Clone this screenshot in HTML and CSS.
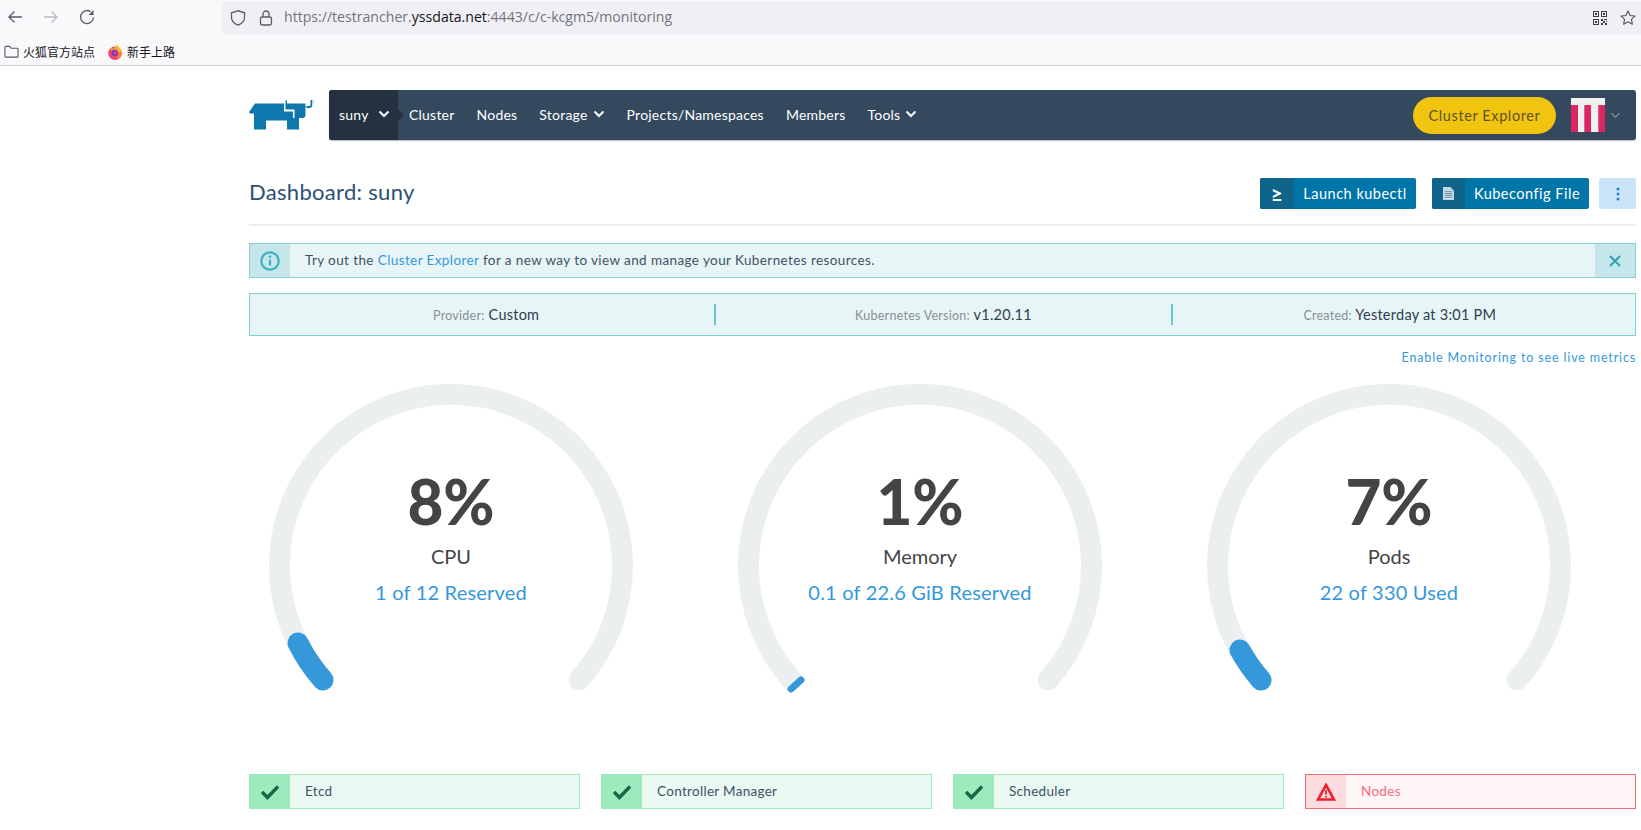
FILE: index.html
```html
<!DOCTYPE html>
<html lang="en">
<head>
<meta charset="utf-8">
<title>Dashboard: suny</title>
<link rel="stylesheet" href="styles.css">
</head>
<body>
<header class="chrome">
  <div class="toolbar">
    <div class="nav-btns">
      <svg class="tb-icon" viewBox="0 0 16 16"><path d="M15 8H1.800M7.500 2.500 2 8l5.500 5.500" fill="none" stroke="#5b5b66" stroke-width="1.300"/></svg>
      <svg class="tb-icon" viewBox="0 0 16 16"><path d="M1 8h13.200M8.500 2.500 14 8l-5.500 5.500" fill="none" stroke="#b9b9bf" stroke-width="1.300"/></svg>
      <svg class="tb-icon" viewBox="0 0 16 16"><path d="M14.500 8.500A6.500 6.500 0 1 1 11.500 2.600" fill="none" stroke="#5b5b66" stroke-width="1.400"/><path d="M14.500 1v5h-5z" fill="#5b5b66"/></svg>
    </div>
    <div class="urlbar">
      <svg class="url-icon" viewBox="0 0 16 16"><path d="M8 .8 1.500 2.800v4.700c0 3.500 2.700 6.200 6.500 7.700 3.800-1.500 6.500-4.200 6.500-7.700V2.800z" fill="none" stroke="#5b5b66" stroke-width="1.300"/></svg>
      <svg class="url-icon lock" viewBox="0 0 16 16"><rect x="2.500" y="7" width="11" height="8" rx="1.800" fill="none" stroke="#5b5b66" stroke-width="1.300"/><path d="M5 7V4a3 3 0 0 1 6 0v3" fill="none" stroke="#5b5b66" stroke-width="1.300"/></svg>
      <span class="url">https://testrancher.<b>yssdata.net</b>:4443/c/c-kcgm5/monitoring</span>
      <svg class="qr" viewBox="0 0 14 14"><path d="M0 0h6v6H0zM1 1v4h4V1zM2 2h2v2H2zM8 0h6v6H8zM9 1v4h4V1zM10 2h2v2h-2zM0 8h6v6H0zM1 9v4h4V9zM2 10h2v2H2zM8 8h2v2H8zM11 8h3v1h-3zM10 10h2v2h-2zM12 12h2v2h-2zM8 12h2v2H8zM13 10h1v1h-1z" fill="#3a3a40" fill-rule="evenodd"/></svg>
      <svg class="star" viewBox="0 0 16 16"><path d="m8 1 2.100 4.500 4.900.600-3.600 3.300 1 4.800L8 11.800l-4.400 2.400 1-4.800L1 6.100l4.900-.600z" fill="none" stroke="#5b5b66" stroke-width="1.200" stroke-linejoin="round"/></svg>
    </div>
  </div>
  <div class="bookmarks">
    <span class="bookmark"><svg class="bm-icon" viewBox="0 0 16 16"><path d="M1 13V3.500a1 1 0 0 1 1-1h3.800l1.700 2H14a1 1 0 0 1 1 1V13a1 1 0 0 1-1 1H2a1 1 0 0 1-1-1z" fill="none" stroke="#5b5b66" stroke-width="1.200"/></svg>火狐官方站点</span>
    <span class="bookmark"><svg class="bm-icon fox" viewBox="0 0 16 16"><circle cx="8" cy="9.200" r="6.800" fill="#f5456c"/><path d="M9 0c1 2 4.500 3 5.800 8L8 11 3 4c2 .500 3.500 1 4 .500C8 3.500 9.500 2 9 0z" fill="#ffb52e"/><path d="M14.800 8c.3 3.500-1.500 6-4 7L8 9z" fill="#ff7a2e"/><circle cx="7.800" cy="9" r="3.400" fill="#7b3fb5"/><circle cx="8.300" cy="8.700" r="1.700" fill="#e8417f"/></svg>新手上路</span>
  </div>
</header>

<main class="page">
  <nav class="topbar">
    <svg class="logo" viewBox="0 0 66 30"><path d="M0 12 6 3.500H35V11.500H44V18H50V29.500H38V20.500H17V29.500H5V13.500L1 13.500z" fill="#0e77ab"/><path d="M36.500 .5H38V3.500H56.500V15q0 3-3 3H45.500V9.500H36.500z" fill="#0e77ab"/><path d="M57.500 6H60q1.500 0 1.500-1.500V0h1.800V5q0 3-3 3H57.500z" fill="#0e77ab"/><circle cx="65" cy="1.500" r=".8" fill="none" stroke="#9cc4d8" stroke-width=".5"/></svg>
    <div class="bar">
      <div class="cluster-cell">suny <svg class="chev" viewBox="0 0 12 8"><path d="M1.500 1.500 6 6l4.500-4.500" fill="none" stroke="#fff" stroke-width="2"/></svg></div>
      <div class="links">
        <a>Cluster</a>
        <a>Nodes</a>
        <a>Storage <svg class="chev" viewBox="0 0 12 8"><path d="M1.500 1.500 6 6l4.500-4.500" fill="none" stroke="#fff" stroke-width="2"/></svg></a>
        <a>Projects/Namespaces</a>
        <a>Members</a>
        <a>Tools <svg class="chev" viewBox="0 0 12 8"><path d="M1.500 1.500 6 6l4.500-4.500" fill="none" stroke="#fff" stroke-width="2"/></svg></a>
      </div>
      <button class="explorer">Cluster Explorer</button>
      <svg class="avatar" viewBox="0 0 34 34"><rect width="34" height="34" fill="#f0f0f0"/><path d="M0 7h7v27H0zM13.300 7H20v27h-6.700zM27.300 7H34v27h-6.700z" fill="#db2660"/></svg>
      <svg class="user-chev" viewBox="0 0 12 8"><path d="M1.500 1.500 6 6l4.500-4.500" fill="none" stroke="#7c8a98" stroke-width="1.600"/></svg>
    </div>
  </nav>

  <section class="heading">
    <h1>Dashboard: suny</h1>
    <div class="actions">
      <button class="action"><span class="action-icon ge">≥</span><span class="action-label">Launch kubectl</span></button>
      <button class="action"><span class="action-icon"><svg class="file" viewBox="0 0 12 14"><path d="M0 0h8l4 4v10H0z" fill="#c5d8e2"/><path d="M2 5h8M2 7h8M2 9h8M2 11h8" stroke="#4f7f9b" stroke-width=".8"/></svg></span><span class="action-label">Kubeconfig File</span></button>
      <button class="more"><svg class="dots" viewBox="0 0 4 14"><circle cx="2" cy="2" r="1.500"/><circle cx="2" cy="7" r="1.500"/><circle cx="2" cy="12" r="1.500"/></svg></button>
    </div>
  </section>

  <section class="banner">
    <div class="banner-icon"><svg class="info" viewBox="0 0 20 20"><circle cx="10" cy="10" r="8.700" fill="none" stroke="#3cb3c1" stroke-width="2.200"/><path d="M10 8.500v6" stroke="#3cb3c1" stroke-width="2.200"/><circle cx="10" cy="5.800" r="1.300" fill="#3cb3c1"/></svg></div>
    <p class="banner-text">Try out the <a>Cluster Explorer</a> for a new way to view and manage your Kubernetes resources.</p>
    <div class="banner-close"><svg class="close" viewBox="0 0 12 12"><path d="M1 1l10 10M11 1 1 11" stroke="#2a9fad" stroke-width="1.800"/></svg></div>
  </section>

  <section class="facts">
    <div class="fact"><span class="fact-key">Provider:</span> Custom</div>
    <div class="fact"><span class="fact-key">Kubernetes Version:</span> v1.20.11</div>
    <div class="fact"><span class="fact-key">Created:</span> Yesterday at 3:01 PM</div>
  </section>

  <div class="monitor-link"><a>Enable Monitoring to see live metrics</a></div>

  <section class="gauges">
    <div class="gauge">
      <svg class="dial" viewBox="0 0 364 320"><path class="track" d="M54 296A171.500 171.500 0 1 1 310 296"/><path class="fill" d="M54 296A171.500 171.500 0 0 1 29 259"/></svg>
      <div class="readout"><div class="pct">8%</div><div class="name">CPU</div><div class="sub">1 of 12 Reserved</div></div>
    </div>
    <div class="gauge">
      <svg class="dial" viewBox="0 0 364 320"><path class="track" d="M54 296A171.500 171.500 0 1 1 310 296"/><path class="fill thin" d="M53 305 63 296"/></svg>
      <div class="readout"><div class="pct">1%</div><div class="name">Memory</div><div class="sub">0.1 of 22.6 GiB Reserved</div></div>
    </div>
    <div class="gauge">
      <svg class="dial" viewBox="0 0 364 320"><path class="track" d="M54 296A171.500 171.500 0 1 1 310 296"/><path class="fill" d="M54 296A171.500 171.500 0 0 1 33 266"/></svg>
      <div class="readout"><div class="pct">7%</div><div class="name">Pods</div><div class="sub">22 of 330 Used</div></div>
    </div>
  </section>

  <section class="statuses">
    <div class="status ok"><span class="status-icon"><svg class="check" viewBox="0 0 20 16"><path d="M2 8l5.500 5.500L18 2.500" fill="none" stroke="#146a46" stroke-width="3.400"/></svg></span><span class="status-label">Etcd</span></div>
    <div class="status ok"><span class="status-icon"><svg class="check" viewBox="0 0 20 16"><path d="M2 8l5.500 5.500L18 2.500" fill="none" stroke="#146a46" stroke-width="3.400"/></svg></span><span class="status-label">Controller Manager</span></div>
    <div class="status ok"><span class="status-icon"><svg class="check" viewBox="0 0 20 16"><path d="M2 8l5.500 5.500L18 2.500" fill="none" stroke="#146a46" stroke-width="3.400"/></svg></span><span class="status-label">Scheduler</span></div>
    <div class="status bad"><span class="status-icon"><svg class="warn" viewBox="0 0 20 18"><path d="M10 2 18 16.500H2z" fill="none" stroke="#f01f2d" stroke-width="2.600"/><path d="M10 7v4.500M10 12.800v1.800" stroke="#f01f2d" stroke-width="1.800"/></svg></span><span class="status-label">Nodes</span></div>
  </section>
</main>
</body>
</html>
```
FILE: styles.css
```css
* { box-sizing: border-box; }
html, body { margin: 0; padding: 0; background: #fff; }
body { font-family: Lato, "Open Sans", sans-serif; color: #3d3d3d; height: 830px; overflow: hidden; }
svg { display: block; }
button { font: inherit; border: 0; padding: 0; }

.chrome { height: 66px; background: #f9f9fb; border-bottom: 1px solid #ccc; }
.toolbar { height: 34px; display: flex; align-items: center; }
.nav-btns { width: 222px; display: flex; gap: 20px; padding-left: 7px; }
.tb-icon { width: 16px; height: 16px; }
.urlbar { flex: 1; height: 33px; margin-top: 1px; background: #f0f0f4; border-radius: 4px 0 0 4px; display: flex; align-items: center; padding-left: 8px; }
.url-icon { width: 16px; height: 16px; margin-right: 12px; }
.url-icon.lock { margin-right: 10px; }
.url { font: 14.100px "Open Sans", sans-serif; color: #73737b; flex: 1; padding-bottom: 2px; }
.url b { font-weight: 400; color: #15141a; }
.qr { width: 14px; height: 14px; margin-right: 13px; }
.star { width: 16px; height: 16px; margin-right: 5px; }
.bookmarks { height: 31px; padding: 4px 0 0 4px; display: flex; align-items: center; gap: 12px; font: 12px "Noto Sans CJK SC", sans-serif; color: #15141a; }
.bookmark { display: flex; align-items: center; gap: 4px; }
.bm-icon { width: 15px; height: 15px; }
.bm-icon.fox { width: 16px; height: 16px; }

.page { padding: 24px 5px 0 249px; }
.topbar { display: flex; height: 50px; align-items: center; }
.logo { width: 66px; height: 30px; margin-right: 14px; flex: none; }
.bar { flex: 1; height: 50px; background: #34495e; border-radius: 3px; display: flex; align-items: center; color: #fff; font-size: 14px; letter-spacing: .22px; box-shadow: 0 1px 1px #bbb; }
.cluster-cell { width: 69px; height: 100%; padding: 0 0 2px 10px; background: #233140; border-radius: 3px 0 0 3px; display: flex; align-items: center; gap: 9px; position: relative; }
.cluster-cell::after { content: ""; position: absolute; right: -6px; top: 19px; border-left: 6px solid #233140; border-top: 6px solid transparent; border-bottom: 6px solid transparent; }
.chev { width: 12px; height: 8px; display: inline-block; }
.links { flex: 1; display: flex; gap: 22px; padding: 0 0 2px 11px; }
.links a { display: flex; align-items: center; gap: 5px; }
.explorer { width: 143px; height: 37px; border-radius: 19px; background: #f1c40f; color: #5a5526; font-size: 14.500px; letter-spacing: .6px; margin-right: 15px; }
.avatar { width: 34px; height: 34px; }
.user-chev { width: 11px; height: 7px; margin: 0 15px 0 5px; }

.heading { display: flex; justify-content: space-between; align-items: flex-start; height: 73px; margin-top: 13px; padding-top: 25px; border-bottom: 2px solid #ebeff0; }
h1 { margin: 0; font-size: 22px; font-weight: 400; color: #2c5075; letter-spacing: .3px; }
.actions { display: flex; }
.action { height: 31px; background: #0075a8; color: #fff; display: flex; align-items: center; border-radius: 2px; margin-right: 16px; overflow: hidden; font-size: 14.500px; letter-spacing: .5px; }
.action + .action { margin-right: 10px; }
.action-icon { width: 34px; height: 31px; background: #0f6489; display: flex; align-items: center; justify-content: center; }
.action + .action .action-icon { width: 33px; }
.ge { font-size: 21px; font-weight: 700; }
.file { width: 11px; height: 13px; }
.action-label { width: 122px; text-align: center; }
.action + .action .action-label { width: 124px; }
.more { width: 37px; height: 31px; background: #cce4f7; border-radius: 2px; display: flex; align-items: center; justify-content: center; }
.dots { width: 4px; height: 14px; fill: #1c84d4; }

.banner { display: flex; height: 35px; margin-top: 17px; background: #e7f5f7; border: 1px solid #8ad0d6; align-items: stretch; }
.banner-icon { width: 40px; background: #c5e7ec; display: flex; align-items: center; justify-content: center; }
.info { width: 20px; height: 20px; }
.banner-text { flex: 1; margin: 0; padding-left: 15px; font-size: 13.500px; letter-spacing: .4px; line-height: 33px; color: #3e5266; }
.banner-text a { color: #3498db; }
.banner-close { width: 40px; background: #c5e7ec; display: flex; align-items: center; justify-content: center; }
.close { width: 12px; height: 12px; }

.facts { display: grid; grid-template-columns: repeat(3, 1fr); height: 43px; margin-top: 15px; padding: 0 8px; background: #e7f5f7; border: 1px solid #7fd0d3; align-items: center; }
.fact { text-align: center; font-size: 14.500px; letter-spacing: .25px; height: 21px; line-height: 21px; color: #2d3e50; }
.fact + .fact { border-left: 2px solid #6fc5cb; }
.fact-key { font-size: 12.500px; color: #888f95; }

.monitor-link { text-align: right; height: 48px; padding-top: 14px; font-size: 12.500px; letter-spacing: .85px; color: #3498db; line-height: 16px; }

.gauges { display: flex; padding-left: 20px; gap: 105px; height: 390px; }
.gauge { position: relative; width: 364px; height: 320px; }
.dial { width: 364px; height: 320px; }
.track { fill: none; stroke: #ebeff0; stroke-width: 21; stroke-linecap: round; }
.fill { fill: none; stroke: #3498db; stroke-width: 21; stroke-linecap: round; }
.fill.thin { stroke-width: 7; }
.readout { position: absolute; left: 0; right: 0; top: 85px; text-align: center; }
.pct { font-size: 62px; font-weight: 900; line-height: 64px; color: #444; }
.name { font-size: 20px; line-height: 26px; margin-top: 10px; color: #444; font-weight: 400; }
.sub { font-size: 20px; line-height: 26px; margin-top: 10px; color: #3498db; letter-spacing: .2px; }

.statuses { display: grid; grid-template-columns: repeat(4, 331px); justify-content: space-between; }
.status { height: 35px; display: flex; align-items: stretch; border: 1px solid #9ceabd; background: #ebf9f3; font-size: 13.500px; letter-spacing: .3px; }
.status-icon { width: 40px; display: flex; align-items: center; justify-content: center; background: #9ceabd; }
.status-label { padding-left: 15px; line-height: 33px; color: #3e5266; }
.check { width: 20px; height: 16px; }
.warn { width: 20px; height: 18px; }
.status.bad { border-color: #f96a6e; background: #fef6f6; }
.bad .status-icon { background: #fcdcdf; }
.bad .status-label { color: #f96a80; }
```
